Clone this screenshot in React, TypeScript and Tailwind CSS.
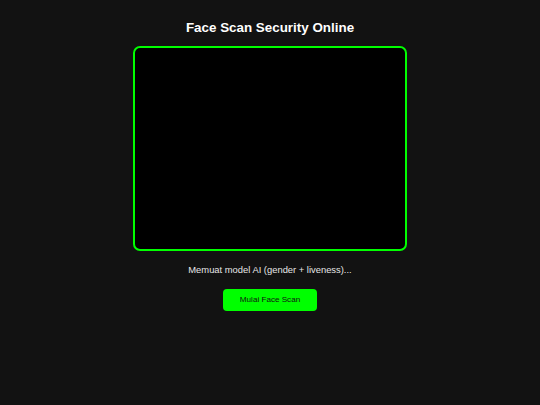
const App = () => {
  return (
    <div className="flex min-h-[405px] flex-col items-center bg-[#121212] pt-[20px] font-['Liberation_Sans',Arial,sans-serif]">
      <h2 className="text-[13.4px] font-bold leading-[16px] text-white">Face Scan Security Online</h2>
      <div className="mt-[10px] h-[205px] w-[274px] rounded-[7px] border-2 border-[#00ff00] bg-black" />
      <p className="mt-[13px] text-[9.4px] leading-[12px] text-[#e6e6e6]">Memuat model AI (gender + liveness)...</p>
      <button className="mt-[13px] h-[22px] w-[94px] rounded-[4px] bg-[#00ff00] text-[8.1px] text-[#111]">
        Mulai Face Scan
      </button>
    </div>
  );
};

export default App;
